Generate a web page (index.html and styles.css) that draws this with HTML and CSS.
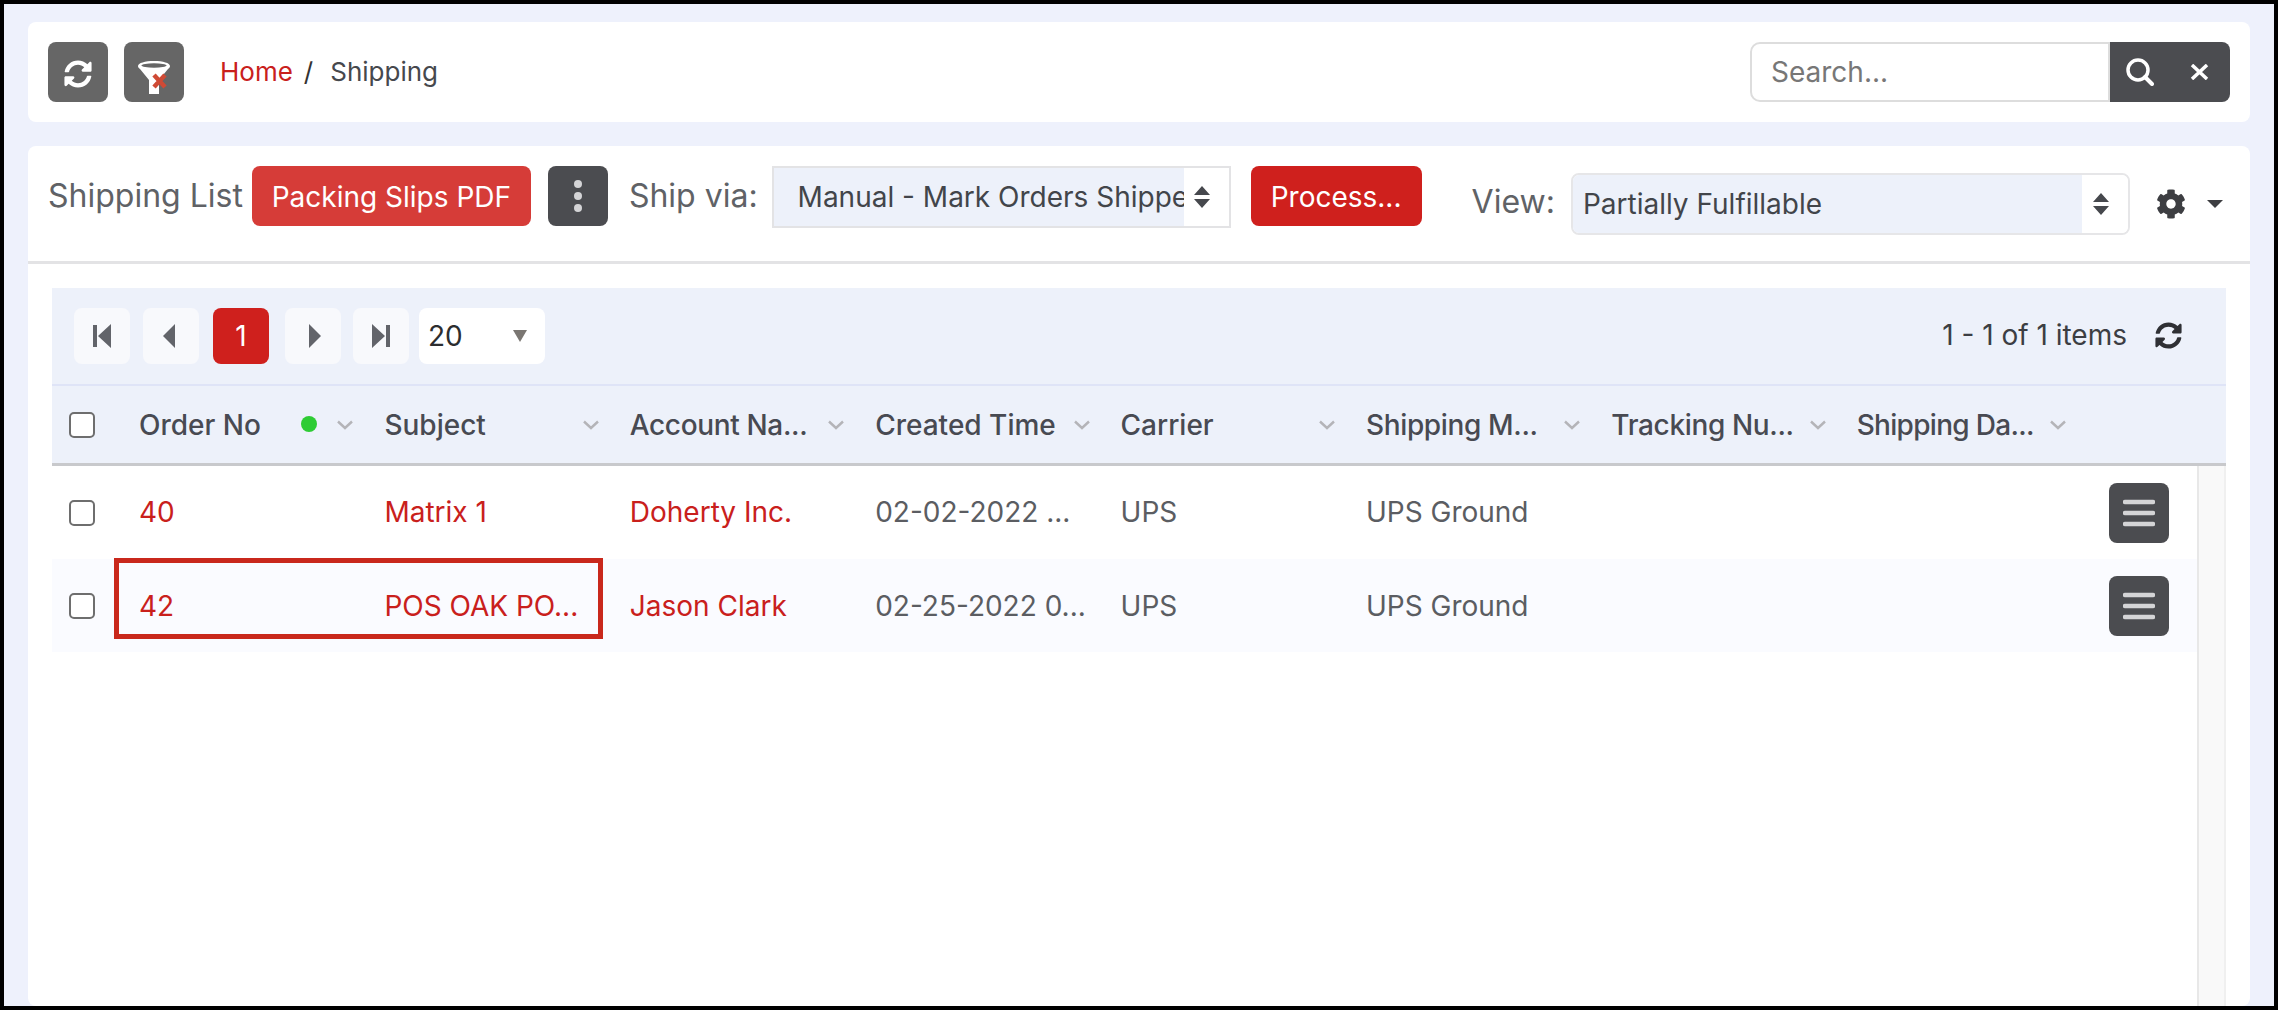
FILE: index.html
```html
<!DOCTYPE html>
<html lang="en">
<head>
<meta charset="utf-8">
<title>Shipping</title>
<link rel="stylesheet" href="styles.css">
</head>
<body>
<svg class="defs" width="0" height="0" aria-hidden="true">
  <symbol id="sync" viewBox="0 0 512 512"><path fill="currentColor" d="M370.72 133.28C339.458 104.008 298.888 87.962 255.848 88c-77.458.068-144.328 53.178-162.791 126.85-1.344 5.363-6.122 9.15-11.651 9.15H24.103c-7.498 0-13.194-6.807-11.807-14.176C33.933 94.924 134.813 8 256 8c66.448 0 126.791 26.136 171.315 68.685L463.03 40.97C478.149 25.851 504 36.559 504 57.941V192c0 13.255-10.745 24-24 24H345.941c-21.382 0-32.09-25.851-16.971-40.971l41.75-41.749zM32 296h134.059c21.382 0 32.09 25.851 16.971 40.971l-41.75 41.75c31.262 29.273 71.835 45.319 114.876 45.28 77.418-.07 144.315-53.144 162.787-126.849 1.344-5.363 6.122-9.15 11.651-9.15h57.304c7.498 0 13.194 6.807 11.807 14.176C478.067 417.076 377.187 504 256 504c-66.448 0-126.791-26.136-171.315-68.685L48.97 471.03C33.851 486.149 8 475.441 8 454.059V320c0-13.255 10.745-24 24-24z"/></symbol>
  <symbol id="updown" viewBox="0 0 16 22"><path fill="currentColor" d="M8 0l8 9H0zM8 22L0 13h16z"/></symbol>
  <symbol id="chev" viewBox="0 0 18 10"><path fill="none" stroke="currentColor" stroke-width="2.4" d="M2 1.500l7 6.500 7-6.500"/></symbol>
  <symbol id="menu" viewBox="0 0 32 28"><path fill="none" stroke="currentColor" stroke-width="4.500" stroke-linecap="round" d="M2 3h28M2 14h28M2 25h28"/></symbol>
</svg>
<div class="frame">
  <header class="card topbar">
    <button class="btn icon grey" type="button" aria-label="Refresh"><svg class="i26"><use href="#sync"/></svg></button>
    <button class="btn icon grey" type="button" aria-label="Clear filters">
      <svg class="i34" viewBox="0 0 32 33"><path fill="#fff" d="M0 5c0-3 7-5 16-5s16 2 16 5c0 1-.5 2-2 3L21 19v14H11V19L2 8C.5 7 0 6 0 5z"/><ellipse cx="16" cy="4.500" rx="12.500" ry="2.200" fill="#666"/><path fill="none" stroke="#cf4a35" stroke-width="4.500" d="M16 14l11 12M27 14L16 26"/></svg>
    </button>
    <nav class="crumbs"><a href="#">Home</a><span class="sep">/</span><span>Shipping</span></nav>
    <div class="search">
      <div class="search-input">Search...</div>
      <div class="search-btns">
        <svg class="i24" viewBox="0 0 28 28"><circle cx="12" cy="12" r="10" fill="none" stroke="currentColor" stroke-width="3.500"/><path stroke="currentColor" stroke-width="4" stroke-linecap="round" d="M19 19l7 7"/></svg>
        <svg class="i16" viewBox="0 0 19 16"><path stroke="currentColor" stroke-width="3.500" d="M2 1l15 14M17 1L2 15"/></svg>
      </div>
    </div>
  </header>

  <section class="card main">
    <div class="toolbar">
      <span class="title">Shipping List</span>
      <button class="btn packing" type="button">Packing Slips PDF</button>
      <button class="btn icon dark" type="button" aria-label="More"><svg class="i8" viewBox="0 0 8 34"><circle cx="4" cy="5" r="4" fill="#d4d4d6"/><circle cx="4" cy="17" r="4" fill="#d4d4d6"/><circle cx="4" cy="29" r="4" fill="#d4d4d6"/></svg></button>
      <span class="label shipvia">Ship via:</span>
      <div class="select ship"><span class="select-text">Manual - Mark Orders Shipped</span><span class="select-arrow"><svg class="ud"><use href="#updown"/></svg></span></div>
      <button class="btn process" type="button">Process...</button>
      <span class="label view">View:</span>
      <div class="select viewsel"><span class="select-text">Partially Fulfillable</span><span class="select-arrow"><svg class="ud"><use href="#updown"/></svg></span></div>
      <svg class="gear" viewBox="0 0 512 512"><path fill="currentColor" d="M487.4 315.7l-42.6-24.6c4.3-23.2 4.3-47 0-70.2l42.6-24.6c4.9-2.8 7.1-8.6 5.5-14-11.1-35.6-30-67.8-54.7-94.6-3.8-4.1-10-5.1-14.8-2.3L380.8 110c-17.9-15.4-38.5-27.3-60.8-35.1V25.8c0-5.6-3.9-10.5-9.4-11.7-36.7-8.2-74.3-7.8-109.2 0-5.5 1.2-9.4 6.1-9.4 11.7V75c-22.2 7.9-42.8 19.8-60.8 35.1L88.7 85.5c-4.9-2.8-11-1.9-14.8 2.3-24.7 26.7-43.6 58.9-54.7 94.6-1.7 5.4.6 11.2 5.5 14L67.3 221c-4.3 23.2-4.3 47 0 70.2l-42.6 24.6c-4.9 2.8-7.1 8.6-5.5 14 11.1 35.6 30 67.8 54.7 94.6 3.8 4.1 10 5.1 14.8 2.3l42.6-24.6c17.9 15.4 38.5 27.3 60.8 35.1v49.2c0 5.6 3.9 10.5 9.4 11.7 36.7 8.2 74.3 7.8 109.2 0 5.5-1.2 9.4-6.1 9.4-11.7v-49.2c22.2-7.9 42.8-19.8 60.8-35.1l42.6 24.6c4.9 2.8 11 1.9 14.8-2.3 24.7-26.7 43.6-58.9 54.7-94.6 1.5-5.5-.7-11.3-5.6-14.1zM256 336c-44.1 0-80-35.9-80-80s35.9-80 80-80 80 35.9 80 80-35.9 80-80 80z"/></svg>
      <svg class="caret" viewBox="0 0 16 8"><path fill="currentColor" d="M0 0h16L8 8z"/></svg>
    </div>

    <div class="grid">
      <div class="pager">
        <button class="pg" type="button" aria-label="First"><svg viewBox="0 0 18 24"><path d="M0 1h4v22H0zM18 0v24L5 12z"/></svg></button>
        <button class="pg" type="button" aria-label="Previous"><svg viewBox="0 0 18 24"><path d="M13 0v24L1 12z"/></svg></button>
        <button class="pg current" type="button">1</button>
        <button class="pg" type="button" aria-label="Next"><svg viewBox="0 0 18 24"><path d="M5 0v24l12-12z"/></svg></button>
        <button class="pg" type="button" aria-label="Last"><svg viewBox="0 0 18 24"><path d="M0 0v24l13-12zM14 1h4v22h-4z"/></svg></button>
        <div class="pagesize"><span>20</span><svg viewBox="0 0 14 12"><path fill="#7a7672" d="M0 0h14L7 12z"/></svg></div>
        <span class="items">1 - 1 of 1 items</span>
        <svg class="pager-sync"><use href="#sync"/></svg>
      </div>

      <div class="row head">
        <div class="cell chk"><span class="box"></span></div>
        <div class="cell"><span class="h-text">Order No</span><span class="dot"></span><svg class="chev"><use href="#chev"/></svg></div>
        <div class="cell"><span class="h-text">Subject</span><svg class="chev"><use href="#chev"/></svg></div>
        <div class="cell"><span class="h-text tight">Account Na...</span><svg class="chev"><use href="#chev"/></svg></div>
        <div class="cell"><span class="h-text">Created Time</span><svg class="chev"><use href="#chev"/></svg></div>
        <div class="cell"><span class="h-text">Carrier</span><svg class="chev"><use href="#chev"/></svg></div>
        <div class="cell"><span class="h-text tight">Shipping M...</span><svg class="chev"><use href="#chev"/></svg></div>
        <div class="cell"><span class="h-text tight">Tracking Nu...</span><svg class="chev"><use href="#chev"/></svg></div>
        <div class="cell"><span class="h-text tighter">Shipping Da...</span><svg class="chev"><use href="#chev"/></svg></div>
        <div class="cell"></div>
      </div>

      <div class="body">
        <div class="rows">
          <div class="row r1">
            <div class="cell chk"><span class="box"></span></div>
            <div class="cell link">40</div>
            <div class="cell link">Matrix 1</div>
            <div class="cell link">Doherty Inc.</div>
            <div class="cell">02-02-2022 ...</div>
            <div class="cell">UPS</div>
            <div class="cell">UPS Ground</div>
            <div class="cell"></div>
            <div class="cell"></div>
            <div class="cell act"><button class="btn icon dark" type="button" aria-label="Menu"><svg class="i32"><use href="#menu"/></svg></button></div>
          </div>
          <div class="row r2">
            <div class="cell chk"><span class="box"></span></div>
            <div class="cell link">42</div>
            <div class="cell link">POS OAK PO...</div>
            <div class="cell link">Jason Clark</div>
            <div class="cell">02-25-2022 0...</div>
            <div class="cell">UPS</div>
            <div class="cell">UPS Ground</div>
            <div class="cell"></div>
            <div class="cell"></div>
            <div class="cell act"><button class="btn icon dark" type="button" aria-label="Menu"><svg class="i32"><use href="#menu"/></svg></button></div>
            <div class="highlight"></div>
          </div>
        </div>
        <div class="scrollbar"></div>
      </div>
    </div>
  </section>
</div>
</body>
</html>
```
FILE: styles.css
```css
* { box-sizing: border-box; }
html, body { margin: 0; height: 100%; }
body { font-family: Inter, "Noto Sans", "Liberation Sans", sans-serif; color: #46484d; background: #000; }
.defs { position: absolute; }
.frame {
  height: 1010px;
  border: 4px solid #000;
  background: #eef1fc;
  padding: 18px 24px 0 24px;
  display: flex;
  flex-direction: column;
  overflow: hidden;
}
.card { background: #fff; border-radius: 8px; }
.btn { border: 0; border-radius: 8px; font: inherit; color: #fff; display: flex; align-items: center; justify-content: center; padding: 0; flex: none; }
.icon { width: 60px; height: 60px; }
.grey { background: #666; color: #fff; }
.dark { background: #4b4c50; color: #d4d4d6; }
.i26 { width: 28px; height: 28px; margin-top: 4px; }
.i34 { width: 32px; height: 33px; margin-top: 10px; }
.i24 { width: 28px; height: 28px; }
.i16 { width: 19px; height: 16px; }
.i8 { width: 8px; height: 34px; }
.i32 { width: 32px; height: 28px; }

.topbar { height: 100px; padding: 20px 20px 20px 20px; display: flex; align-items: center; gap: 16px; flex: none; }
.crumbs { margin-left: 20px; font-size: 26px; display: flex; align-items: center; line-height: 1; }
.crumbs a { color: #c9201c; text-decoration: none; }
.crumbs .sep { margin: 0 17px 0 11px; color: #333; }
.search { margin-left: auto; display: flex; height: 60px; }
.search-input { width: 360px; border: 2px solid #ddd; border-radius: 10px 0 0 10px; padding-left: 19px; display: flex; align-items: center; font-size: 28px; color: #777; }
.search-btns { width: 120px; background: #4b4c50; color: #fff; border-radius: 0 8px 8px 0; display: flex; align-items: center; padding-left: 16px; gap: 36px; }

.main { margin-top: 24px; flex: 1; display: flex; flex-direction: column; }
.toolbar { height: 118px; flex: none; border-bottom: 3px solid #e3e3e5; display: flex; align-items: flex-start; padding: 20px 0 0 20px; position: relative; }
.title, .label { font-size: 32px; color: #606266; line-height: 60px; white-space: nowrap; }
.packing { margin-left: 9px; width: 279px; height: 60px; padding-top: 2px; background: #d63c38; font-size: 28px; }
.toolbar .dark { margin-left: 17px; }
.shipvia { margin-left: 21px; }
.select { display: flex; flex: none; font-size: 28px; color: #42454a; }
.ship { width: 459px; height: 62px; margin-left: 14px; border: 2px solid #e3e3e5; }
.select-text { display: block; background: #edf1fa; overflow: hidden; white-space: nowrap; line-height: 58px; }
.ship .select-text { width: 410px; padding-left: 24px; }
.select-arrow { flex: 1; background: #fff; display: flex; align-items: center; justify-content: center; padding-right: 8px; color: #46484d; }
.ud { width: 16px; height: 22px; }
.process { margin-left: 20px; width: 171px; height: 60px; padding-top: 2px; background: #cf201d; font-size: 28px; }
.view { margin-left: 50px; margin-top: 6px; }
.viewsel { width: 559px; height: 62px; margin-left: 16px; margin-top: 7px; border: 2px solid #e6e6e8; border-radius: 8px; overflow: hidden; }
.viewsel .select-text { width: 509px; padding-left: 10px; line-height: 58px; }
.gear { width: 30px; height: 32px; margin: 22px 0 0 26px; color: #3d3e42; flex: none; }
.caret { width: 16px; height: 8px; margin: 34px 0 0 21px; color: #3d3e42; flex: none; }

.grid { margin: 24px 24px 0 24px; flex: 1; display: flex; flex-direction: column; min-height: 0; }
.pager { height: 98px; flex: none; background: #edf1fa; border-bottom: 2px solid #dfe4f7; display: flex; align-items: flex-start; padding: 20px 0 0 22px; font-size: 28px; }
.pg { width: 56px; height: 56px; border: 0; border-radius: 8px; background: #f8f9fc; margin-right: 13px; display: flex; align-items: center; justify-content: center; padding: 0; font: inherit; }
.pg svg { width: 18px; height: 24px; fill: #62646a; }
.pg.current { background: #cf201d; color: #fff; margin-left: 1px; margin-right: 16px; }
.pg:nth-child(4) { margin-right: 12px; }
.pg:nth-child(5) { margin-right: 10px; }
.pagesize { width: 126px; height: 56px; background: #fff; border-radius: 8px; display: flex; align-items: center; justify-content: space-between; padding: 0 18px 0 9px; color: #2c2d30; }
.pagesize svg { width: 14px; height: 12px; }
.items { margin-left: auto; line-height: 54px; color: #3c3e43; }
.pager-sync { width: 27px; height: 27px; margin: 14px 44px 0 28px; color: #2f3034; }

.row { display: grid; grid-template-columns: 73px repeat(8, 245.4px) 1fr; align-items: center; font-size: 28px; position: relative; }
.head { height: 80px; flex: none; background: #edf1fa; border-bottom: 3px solid #c8c9cc; font-weight: 500; color: #484a52; }
.cell { padding-left: 14px; display: flex; align-items: center; white-space: nowrap; height: 100%; position: relative; }
.head .cell { padding-right: 16px; }
.chk { padding-left: 17px; }
.box { display: block; width: 26px; height: 26px; border: 2px solid #6e6e6e; border-radius: 5px; background: #fff; }
.h-text { flex: none; }
.tight { letter-spacing: -0.35px; }
.tighter { letter-spacing: -0.7px; }
.dot { width: 16px; height: 16px; border-radius: 50%; background: #2ecc34; position: absolute; left: 176px; top: 30px; }
.chev { width: 18px; height: 10px; color: #b4b4b8; margin-left: auto; flex: none; }
.cell:nth-child(9) .chev { margin-left: 15px; }

.body { flex: 1; display: flex; min-height: 0; }
.rows { flex: 1; min-width: 0; }
.scrollbar { width: 29px; flex: none; background: #f9f9f9; border-left: 2px solid #e8e8e8; border-right: 2px solid #f0f0f0; }
.rows .row { height: 93px; color: #5b5d62; }
.r1 .link, .r1 .cell:nth-child(n+5):nth-child(-n+7) { padding-bottom: 2px; }
.r2 { background: #fafbff; }
.link { color: #c9201c; }
.act { justify-content: flex-start; padding-left: 21px; }
.highlight { position: absolute; left: 62px; top: -1px; width: 489px; height: 81px; border: 5px solid #c9281c; pointer-events: none; }
```
